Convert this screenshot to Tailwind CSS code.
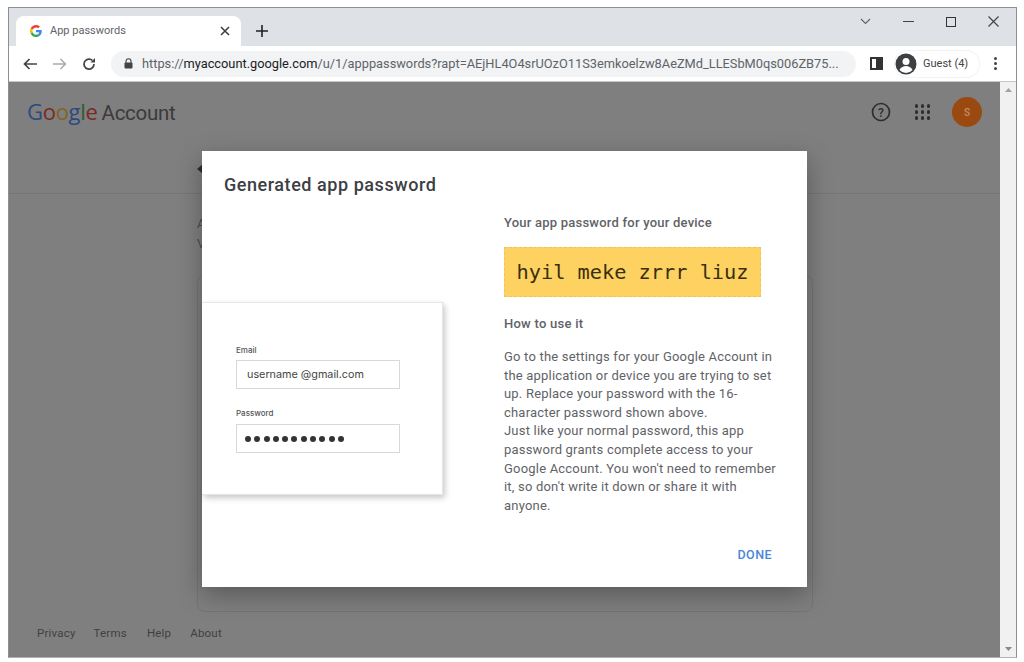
<!DOCTYPE html>
<html lang="en">
  <head>
    <meta charset="UTF-8" />
    <title>App passwords</title>
    <script src="https://cdn.jsdelivr.net/npm/@tailwindcss/browser@4"></script>
  </head>
  <body class="bg-white font-['Roboto',sans-serif] overflow-hidden">
    <div class="w-[1024px] h-[662px] pt-[7px] pl-[8px]">
      <!-- Browser window -->
      <div class="w-[1009px] h-[651px] border border-[#8f8f8f] border-b-[#b0b0b0] flex flex-col">
        <!-- Tab strip -->
        <div class="h-[38px] bg-[#dee1e6] flex pt-[8px] pl-[7px] relative shrink-0">
          <div class="w-[225px] h-[30px] bg-white rounded-t-[8px] flex items-center pl-[14px] pr-[10px]">
            <svg width="12" height="12" viewBox="0 0 48 48">
              <path fill="#EA4335" d="M24 9.500c3.500 0 6.700 1.300 9.100 3.500l6.800-6.800C35.800 2.400 30.300 0 24 0 14.600 0 6.500 5.400 2.600 13.200l7.900 6.100C12.400 13.600 17.700 9.500 24 9.500z"/>
              <path fill="#4285F4" d="M47 24.500c0-1.600-.1-3.100-.4-4.500H24v9h12.900c-.6 3-2.200 5.500-4.700 7.200l7.600 5.900C44.300 37.900 47 31.800 47 24.500z"/>
              <path fill="#FBBC05" d="M10.500 28.700c-.5-1.400-.8-3-.8-4.700s.3-3.200.8-4.700l-7.900-6.100C1 16.500 0 20.100 0 24s1 7.500 2.600 10.800l7.900-6.100z"/>
              <path fill="#34A853" d="M24 48c6.500 0 11.900-2.100 15.800-5.900l-7.600-5.900c-2.100 1.400-4.900 2.300-8.200 2.300-6.300 0-11.600-4.100-13.500-9.800l-7.900 6.100C6.500 42.600 14.600 48 24 48z"/>
            </svg>
            <span class="ml-[8px] pt-[1px] text-[11px] text-[#5f6368] flex-1">App passwords</span>
            <svg width="10" height="10" viewBox="0 0 10 10" class="mr-[1px]"><path d="M1 1l8 8M9 1l-8 8" stroke="#3c4043" stroke-width="1.600"/></svg>
          </div>
          <svg width="12" height="12" viewBox="0 0 12 12" class="ml-[15px] mt-[9px]"><path d="M6 0v12M0 6h12" stroke="#202124" stroke-width="1.600"/></svg>
          <!-- Window controls -->
          <div class="absolute right-[17px] top-[8px] flex items-center gap-[32px]">
            <svg width="11" height="7" viewBox="0 0 11 7"><path d="M1 1l4.500 4.500L10 1" fill="none" stroke="#5f6368" stroke-width="1.100"/></svg>
            <div class="w-[11px] h-[1.500px] bg-[#444]"></div>
            <div class="w-[10px] h-[10px] border-[1.500px] border-[#333]"></div>
            <svg width="11" height="11" viewBox="0 0 11 11"><path d="M.5.5l10 10M10.500.5l-10 10" stroke="#444" stroke-width="1.200"/></svg>
          </div>
        </div>
        <!-- Toolbar -->
        <div class="h-[36px] bg-white flex items-center shrink-0 border-b border-[#c9c9c9]">
          <svg width="14" height="12" viewBox="0 0 14 12" class="ml-[14px]"><path d="M14 6H2M6.500 1L1.500 6l5 5" fill="none" stroke="#444" stroke-width="1.700"/></svg>
          <svg width="14" height="12" viewBox="0 0 14 12" class="ml-[16px]"><path d="M0 6h12M7.500 1l5 5-5 5" fill="none" stroke="#a9abae" stroke-width="1.500"/></svg>
          <svg width="14" height="14" viewBox="0 0 14 14" class="ml-[15px]"><path d="M12 7a5 5 0 1 1-1.500-3.500" fill="none" stroke="#444" stroke-width="1.700"/><path d="M13 1v4.500H8.500z" fill="#444"/></svg>
          <!-- Address bar -->
          <div class="ml-[15px] w-[745px] h-[26px] bg-[#f1f3f4] rounded-full flex items-center pl-[13px] text-[12.800px] text-[#5f6368] whitespace-nowrap overflow-hidden">
            <svg width="9" height="11" viewBox="0 0 9 11" class="mr-[9px] shrink-0"><path d="M2 5V3.200a2.500 2.500 0 0 1 5 0V5" fill="none" stroke="#444" stroke-width="1.100"/><rect x="0.500" y="4.500" width="8" height="6" rx="1" fill="#444"/></svg>
            <span>https://<span class="text-[#202124]">myaccount.google.com</span>/u/1/apppasswords?rapt=AEjHL4O4srUOzO11S3emkoelzw8AeZMd_LLESbM0qs006ZB75...</span>
          </div>
          <div class="ml-[14px] w-[13px] h-[13px] border-2 border-[#333] flex justify-end"><div class="w-[5px] bg-[#333]"></div></div>
          <!-- Profile chip -->
          <div class="ml-[12px] h-[26px] w-[84px] rounded-full shadow-[0_0_0_1px_#f1f3f4] flex items-center">
            <svg width="22" height="22" viewBox="0 0 22 22"><circle cx="11" cy="11" r="10.500" fill="#3c4043"/><circle cx="11" cy="8.500" r="3.500" fill="#fff"/><path d="M4.500 17c1.500-3 4-4 6.500-4s5 1 6.500 4a8.500 8.500 0 0 1-13 0z" fill="#fff"/></svg>
            <span class="ml-[6px] pt-[2px] text-[11px] text-[#444]">Guest (4)</span>
          </div>
          <div class="ml-[15px] flex flex-col gap-[2px]">
            <div class="w-[3px] h-[3px] rounded-full bg-[#444]"></div>
            <div class="w-[3px] h-[3px] rounded-full bg-[#444]"></div>
            <div class="w-[3px] h-[3px] rounded-full bg-[#444]"></div>
          </div>
        </div>
        <!-- Page under the dialog -->
        <div class="flex-1 flex bg-[#7f7f7f] relative min-h-0">
          <div class="flex-1 flex flex-col relative">
            <div class="h-[112px] border-b border-[#757575] shrink-0">
              <div class="flex items-center justify-between pl-[18px] pr-[18px] pt-[14px]">
                <div class="flex items-baseline text-[22px] leading-[30px] tracking-[-0.3px]">
                  <span class="font-['Open_Sans',sans-serif]"><span class="text-[#2c4a80]">G</span><span class="text-[#7a2a22]">o</span><span class="text-[#80651a]">o</span><span class="text-[#2c4a80]">g</span><span class="text-[#2c5c38]">l</span><span class="text-[#7a2a22]">e</span></span>
                  <span class="ml-[4px] text-[20.500px] text-[#3a3a3a]">Account</span>
                </div>
                <div class="flex items-center">
                  <svg width="20" height="20" viewBox="0 0 20 20"><circle cx="10" cy="10" r="8.500" fill="none" stroke="#2e2e2e" stroke-width="1.700"/><text x="10" y="14.500" text-anchor="middle" font-size="12" font-family="Roboto" font-weight="500" fill="#2e2e2e">?</text></svg>
                  <div class="ml-[24px] grid grid-cols-3 gap-[2.500px]">
                    <div class="w-[3.500px] h-[3.500px] rounded-full bg-[#2e2e2e]"></div>
                    <div class="w-[3.500px] h-[3.500px] rounded-full bg-[#2e2e2e]"></div>
                    <div class="w-[3.500px] h-[3.500px] rounded-full bg-[#2e2e2e]"></div>
                    <div class="w-[3.500px] h-[3.500px] rounded-full bg-[#2e2e2e]"></div>
                    <div class="w-[3.500px] h-[3.500px] rounded-full bg-[#2e2e2e]"></div>
                    <div class="w-[3.500px] h-[3.500px] rounded-full bg-[#2e2e2e]"></div>
                    <div class="w-[3.500px] h-[3.500px] rounded-full bg-[#2e2e2e]"></div>
                    <div class="w-[3.500px] h-[3.500px] rounded-full bg-[#2e2e2e]"></div>
                    <div class="w-[3.500px] h-[3.500px] rounded-full bg-[#2e2e2e]"></div>
                  </div>
                  <div class="ml-[22px] w-[30px] h-[30px] rounded-full bg-[#9a4a10] flex items-center justify-center text-[10px] text-[#c98a5f] font-medium">S</div>
                </div>
              </div>
              <!-- Back arrow, mostly hidden by the dialog -->
              <svg width="8" height="10" viewBox="0 0 8 10" class="ml-[188px] mt-[36px]"><path d="M0 5l6-5v10z" fill="#2e2e2e"/></svg>
            </div>
            <!-- Start of the page text, the rest sits behind the dialog -->
            <div class="ml-[188px] mt-[20px] text-[13px] leading-[20px] text-[#4d4d4d]">
              <div>A</div>
              <div>V</div>
            </div>
            <!-- Card outline behind the dialog -->
            <div class="ml-[188px] mt-[21px] w-[616px] h-[337px] border border-[#747474] rounded-[8px]"></div>
            <div class="flex pl-[28px] mt-[13px] text-[11.500px] text-[#3f3f3f] tracking-[0.2px]">
              <span>Privacy</span><span class="ml-[18px]">Terms</span><span class="ml-[20px]">Help</span><span class="ml-[19px]">About</span>
            </div>
          </div>
          <!-- Scrollbar -->
          <div class="w-[16px] shrink-0 bg-[#f1f1f1] flex flex-col justify-between items-center py-[6px]">
            <svg width="7" height="4" viewBox="0 0 7 4"><path d="M3.500 0L7 4H0z" fill="#a3a3a3"/></svg>
            <svg width="7" height="4" viewBox="0 0 7 4"><path d="M3.500 4L7 0H0z" fill="#8a8a8a"/></svg>
          </div>
          <!-- Dialog -->
          <div class="absolute left-[193px] top-[69px] w-[605px] h-[436px] bg-white shadow-[0_8px_24px_rgba(0,0,0,0.3)] flex">
            <div class="w-[302px] shrink-0">
              <h2 class="pl-[22px] pt-[22px] text-[18px] leading-[24px] font-medium text-[#3c4043] tracking-[0.55px] whitespace-nowrap">Generated app password</h2>
              <div class="mt-[105px] w-[241px] h-[193px] border border-[#e6e6e6] border-l-0 shadow-[2px_3px_6px_rgba(0,0,0,0.22)] pl-[34px] pt-[42px]">
                <div class="text-[8px] leading-[10px] font-medium text-[#555] font-['Inter',sans-serif]">Email</div>
                <div class="mt-[5px] w-[164px] h-[29px] border border-[#d8d8d8] pl-[10px] pt-[1px] flex items-center text-[10.800px] text-[#444] font-['Inter',sans-serif]">username @gmail.com</div>
                <div class="mt-[19px] text-[8px] leading-[10px] font-medium text-[#555] font-['Inter',sans-serif]">Password</div>
                <div class="mt-[6px] w-[164px] h-[29px] border border-[#d8d8d8] pl-[8px] flex items-center gap-[3.300px]">
                  <div class="w-[6px] h-[6px] rounded-full bg-[#333]"></div>
                  <div class="w-[6px] h-[6px] rounded-full bg-[#333]"></div>
                  <div class="w-[6px] h-[6px] rounded-full bg-[#333]"></div>
                  <div class="w-[6px] h-[6px] rounded-full bg-[#333]"></div>
                  <div class="w-[6px] h-[6px] rounded-full bg-[#333]"></div>
                  <div class="w-[6px] h-[6px] rounded-full bg-[#333]"></div>
                  <div class="w-[6px] h-[6px] rounded-full bg-[#333]"></div>
                  <div class="w-[6px] h-[6px] rounded-full bg-[#333]"></div>
                  <div class="w-[6px] h-[6px] rounded-full bg-[#333]"></div>
                  <div class="w-[6px] h-[6px] rounded-full bg-[#333]"></div>
                  <div class="w-[6px] h-[6px] rounded-full bg-[#333]"></div>
                </div>
              </div>
            </div>
            <div class="flex-1 pt-[64px]">
              <h3 class="text-[13px] leading-[16px] font-medium text-[#5f6368] tracking-[0.22px]">Your app password for your device</h3>
              <div class="mt-[16px] w-[257px] h-[50px] bg-[#fdd260] border border-dashed border-[#efc557] flex items-center justify-center text-[20.300px] font-['DejaVu_Sans_Mono',monospace] text-[#3a2e10]">hyil meke zrrr liuz</div>
              <h3 class="mt-[19px] text-[13px] leading-[16px] font-medium text-[#5f6368] tracking-[0.25px]">How to use it</h3>
              <p class="mt-[16px] w-[278px] text-[13px] leading-[18.600px] text-[#5f6368] tracking-[0.2px]">Go to the settings for your Google Account in the application or device you are trying to set up. Replace your password with the 16-character password shown above.<br />Just like your normal password, this app password grants complete access to your Google Account. You won't need to remember it, so don't write it down or share it with anyone.</p>
              <div class="mt-[31px] w-[268px] text-right text-[12.500px] font-medium text-[#4a86d8] tracking-[0.45px]">DONE</div>
            </div>
          </div>
        </div>
      </div>
    </div>
  </body>
</html>
